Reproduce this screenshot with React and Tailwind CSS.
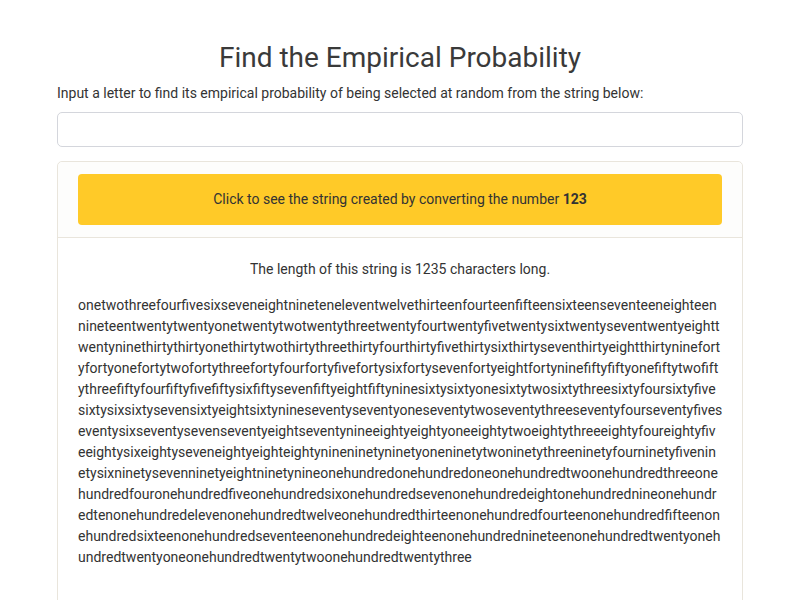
import { useMemo, useState } from 'react'

const ONES = ['', 'one', 'two', 'three', 'four', 'five', 'six', 'seven', 'eight', 'nine', 'ten', 'eleven', 'twelve', 'thirteen', 'fourteen', 'fifteen', 'sixteen', 'seventeen', 'eighteen', 'nineteen']
const TENS = ['', '', 'twenty', 'thirty', 'forty', 'fifty', 'sixty', 'seventy', 'eighty', 'ninety']

function toWords(n) {
  if (n >= 100) return ONES[Math.floor(n / 100)] + 'hundred' + toWords(n % 100)
  if (n >= 20) return TENS[Math.floor(n / 10)] + ONES[n % 10]
  return ONES[n]
}

// where the string wraps in the original layout
const LINE_ENDS = [
  'eighteen',
  'twentyeightt',
  'thirtyninefort',
  'fiftytwofift',
  'sixtyfoursixtyfive',
  'seventyfives',
  'eightyfiv',
  'ninetyfivenin',
  'hundredthreeone',
  'hundrednineonehundr',
  'hundredfifteenon',
  'hundredtwentyoneh',
]

function splitLines(text) {
  const lines = []
  let pos = 0
  for (const end of LINE_ENDS) {
    const idx = text.indexOf(end, pos + 60)
    if (idx === -1) break
    lines.push(text.slice(pos, idx + end.length))
    pos = idx + end.length
  }
  lines.push(text.slice(pos))
  return lines
}

export default function App() {
  const [letter, setLetter] = useState('')
  const number = 123

  const text = useMemo(() => {
    let s = ''
    for (let i = 1; i <= number; i++) s += toWords(i)
    return s
  }, [])
  const lines = useMemo(() => splitLines(text), [text])

  return (
    <div className="min-h-screen bg-white font-['Roboto',sans-serif] text-[#333]">
      <div className="w-[686px] mx-auto pt-[40px]">
        <h1 className="text-center text-[28px] leading-[36px] text-[#3a3a3a]">
          Find the Empirical Probability
        </h1>
        <p className="mt-[7px] text-[14px] leading-[21px] text-[#333]">
          Input a letter to find its empirical probability of being selected at random from the string below:
        </p>
        <input
          value={letter}
          onChange={(e) => setLetter(e.target.value)}
          className="mt-[8px] block w-full h-[35px] rounded-[5px] border border-[#d4d6dc] bg-white px-3 outline-none"
        />

        <div className="mt-[14px] rounded-[5px] border border-[#e9e5dc]">
          <div className="bg-[#fdfdfc] px-[20px] pt-[12px] pb-[12px] border-b border-[#e9e5dc] rounded-t-[5px]">
            <button className="w-full h-[51px] rounded-[4px] bg-[#ffca28] text-[14px] text-[#333]">
              Click to see the string created by converting the number <b>{number}</b>
            </button>
          </div>
          <div className="px-[20px] pt-[21px] pb-[40px]">
            <p className="text-center text-[14px] leading-[21px]">
              The length of this string is {text.length} characters long.
            </p>
            <div className="mt-[15px] text-[14px] leading-[21px]">
              {lines.map((line, i) => (
                <div key={i} className="whitespace-nowrap">{line}</div>
              ))}
            </div>
          </div>
        </div>
      </div>
    </div>
  )
}
